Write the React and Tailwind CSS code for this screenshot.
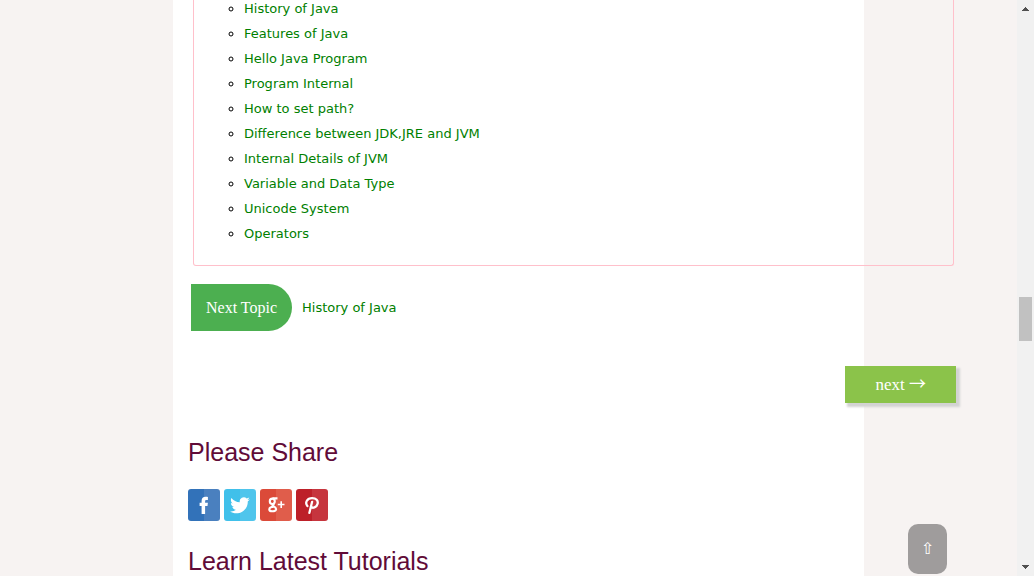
const topics = [
  "History of Java",
  "Features of Java",
  "Hello Java Program",
  "Program Internal",
  "How to set path?",
  "Difference between JDK,JRE and JVM",
  "Internal Details of JVM",
  "Variable and Data Type",
  "Unicode System",
  "Operators",
];

const shares = [
  {
    name: "Facebook",
    left: "#3272b9",
    right: "#4a80bf",
    glyph: (
      <path
        fill="#fff"
        d="M13.6 25v-8h-2v-3.300h2v-1.700c0-2.900 1.500-4.200 4-4.200 1 0 1.900.1 2.300.2v3.100h-1.400c-1.200 0-1.400.6-1.400 1.400v1.200h2.800l-.4 3.300h-2.400v8z"
      />
    ),
  },
  {
    name: "Twitter",
    left: "#40c0ea",
    right: "#4fc5ec",
    glyph: (
      <path
        fill="#fff"
        d="M25.800 10.200c-.7.3-1.500.5-2.300.6.8-.5 1.500-1.300 1.800-2.200-.8.5-1.700.8-2.600 1a4.050 4.050 0 0 0-6.900 3.700c-3.400-.2-6.400-1.800-8.400-4.300-1 1.800-.5 4.200 1.300 5.400-.7 0-1.300-.2-1.800-.5 0 2 1.400 3.600 3.200 4-.6.2-1.200.2-1.800.1.5 1.600 2 2.800 3.800 2.800a8.200 8.200 0 0 1-6 1.700c1.800 1.200 3.900 1.800 6.200 1.800 7.600 0 11.700-6.300 11.500-12 .8-.6 1.500-1.300 2-2.100z"
      />
    ),
  },
  {
    name: "Google Plus",
    left: "#db4a39",
    right: "#e05d4b",
    glyph: (
      <g fill="none" stroke="#fff" strokeWidth="2.100">
        <ellipse cx="12.300" cy="12.300" rx="2.500" ry="2.700" />
        <path d="M12.500 9.400h5M14.300 14.700c-1.500 1-2.600 1.300-1.100 2.200 2.100 1.200 3.400 2 2.800 3.800-.8 2.200-6.700 2.200-6.700-.3 0-1.900 2.100-2.700 4.500-2.700" />
        <path strokeWidth="1.600" d="M17.800 15.500h6.700M21.200 12.200v6.700" />
      </g>
    ),
  },
  {
    name: "Pinterest",
    left: "#bd2029",
    right: "#c6353e",
    glyph: (
      <path
        fill="none"
        stroke="#fff"
        strokeWidth="2.300"
        strokeLinecap="round"
        d="M11.400 17c-2.800-3.400-.2-7.900 4.700-7.900 4.200 0 6.200 2.600 5.500 5.600-.9 3.900-5.200 5.100-6.700 2.800M16.100 12.800l-2.700 11"
      />
    ),
  },
];

function ShareLink({ name, left, right, glyph }) {
  return (
    <a href="#" aria-label={name} className="block size-8 overflow-hidden rounded-[3px]">
      <svg viewBox="0 0 32 32" className="block size-8" aria-hidden="true">
        <path fill={left} d="M0 0h16v32H0z" />
        <path fill={right} d="M16 0h16v32H16z" />
        {glyph}
      </svg>
    </a>
  );
}

function Heading({ children }) {
  return (
    <h2 className="font-['Liberation_Sans',Arial,sans-serif] text-[25px] leading-[29px] text-[#610b38]">
      {children}
    </h2>
  );
}

export default function App() {
  return (
    <div className="flex h-screen overflow-hidden bg-[#f7f3f2] font-[Verdana,'DejaVu_Sans',sans-serif] text-[13px]">
      <div className="w-[173px] shrink-0" />
      <main className="min-w-0 flex-1 bg-white pl-[15px]">
        <div className="-mr-[92px] flex flex-col">
          <nav className="-mt-1 mr-[2px] ml-[5px] rounded-[3px] border border-t-0 border-[#ffc0cb] pb-[19px] pl-[50px]">
            <ul className="list-[circle] text-black">
              {topics.map((topic) => (
                <li key={topic} className="leading-[25px]">
                  <a href="#" className="text-[#008000]">{topic}</a>
                </li>
              ))}
            </ul>
          </nav>
          <div className="mt-[18px] ml-[3px] flex items-center gap-[10px]">
            <span className="rounded-r-3xl bg-[#4caf50] px-[15px] py-3 font-['Liberation_Serif',serif] text-base leading-[23px] text-white">
              Next Topic
            </span>
            <a href="#" className="leading-[21px] text-[#008000]">History of Java</a>
          </div>
          <a
            href="#"
            className="mt-[35px] self-end bg-[#8bc34a] px-[30px] py-[7px] font-['Liberation_Serif',serif] text-[17px] leading-[23px] text-white shadow-[3px_3px_2px_1px_#d3d3d3]"
          >
            next <span className="font-['Noto_Sans_CJK_SC',sans-serif] leading-none">→</span>
          </a>
          <div className="mt-[35px]">
            <Heading>Please Share</Heading>
          </div>
          <div className="mt-[22px] flex gap-1">
            {shares.map((share) => (
              <ShareLink key={share.name} {...share} />
            ))}
          </div>
          <div className="mt-[26px]">
            <Heading>Learn Latest Tutorials</Heading>
          </div>
        </div>
      </main>
      <div className="w-[153px] shrink-0" />
      <div className="flex w-[17px] shrink-0 flex-col items-center bg-[#f1f1f1] py-[7px]" aria-hidden="true">
        <svg viewBox="0 0 7 4" className="h-1 w-[7px]" shapeRendering="crispEdges">
          <path fill="#505050" d="M3 0h1v1h1v1h1v1h1v1H0V3h1V2h1V1h1z" />
        </svg>
        <div className="min-h-0 flex-[286]" />
        <div className="h-11 w-[13px] bg-[#c1c1c1]" />
        <div className="min-h-0 flex-[224]" />
        <svg viewBox="0 0 7 4" className="h-1 w-[7px]" shapeRendering="crispEdges">
          <path fill="#505050" d="M0 0h7v1H6v1H5v1H4v1H3V3H2V2H1V1H0z" />
        </svg>
      </div>
      <button
        type="button"
        aria-label="Back to top"
        className="fixed right-[87px] bottom-[2px] h-[50px] w-[39px] rounded-[10px] bg-[#9f9c9c] text-base text-white"
      >
        ⇧
      </button>
    </div>
  );
}
